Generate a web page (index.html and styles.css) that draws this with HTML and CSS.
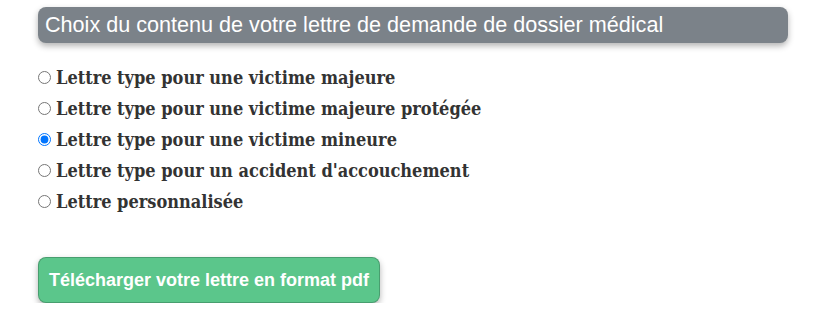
FILE: index.html
```html
<!DOCTYPE html>
<html lang="fr">
<head>
<meta charset="utf-8">
<link rel="stylesheet" href="styles.css">
</head>
<body>
<div class="wrap">
  <h2 class="title">Choix du contenu de votre lettre de demande de dossier médical</h2>
  <form class="choices">
    <label class="choice"><input type="radio" name="l"> Lettre type pour une victime majeure</label>
    <label class="choice"><input type="radio" name="l"> Lettre type pour une victime majeure protégée</label>
    <label class="choice"><input type="radio" name="l" checked> Lettre type pour une victime mineure</label>
    <label class="choice"><input type="radio" name="l"> Lettre type pour un accident d'accouchement</label>
    <label class="choice"><input type="radio" name="l"> Lettre personnalisée</label>
  </form>
  <button class="dl" type="button">Télécharger votre lettre en format pdf</button>
</div>
</body>
</html>
```
FILE: styles.css
```css
html, body { margin: 0; padding: 0; background: #fff; }
.wrap { padding: 7px 31px 0 38px; display: flex; flex-direction: column; align-items: flex-start; }
.title {
  align-self: stretch;
  margin: 0;
  height: 36px;
  box-sizing: border-box;
  padding: 0 7px;
  display: flex; align-items: center;
  background: #7b8289;
  color: #fff;
  font-family: "Liberation Sans", Arial, sans-serif;
  font-weight: normal;
  font-size: 21.6px;
  border-radius: 8px;
  box-shadow: 0 3px 6px rgba(0,0,0,0.3);
}
.choices { margin-top: 19px; display: flex; flex-direction: column; }
.choice {
  height: 31px; display: flex; align-items: center;
  font-family: "DejaVu Serif Condensed", "DejaVu Serif", serif; font-stretch: semi-condensed; font-weight: bold; font-size: 18px; color: #333;
}
.choice input { margin: 0 5px 0 0; width: 13px; height: 13px; }
.dl {
  margin-top: 40px;
  height: 46px; width: 342px;
  background: #5bc68b; color: #fff;
  border: 1px solid rgba(0,0,0,0.2);
  border-radius: 8px;
  font-family: "Liberation Sans", Arial, sans-serif; font-weight: bold; font-size: 18px;
  box-shadow: 0 3px 6px rgba(0,0,0,0.3);
}
```
